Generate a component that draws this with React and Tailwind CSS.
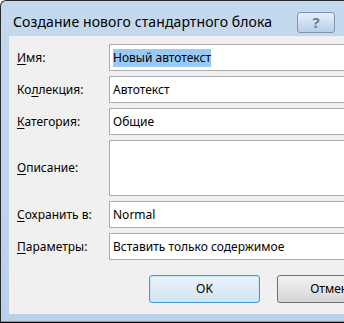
import React from 'react';

const font = { fontFamily: '"Noto Sans", "DejaVu Sans", sans-serif' };

const Label = ({ k, rest, pre = '' }) => (
    <span className="w-[92px] shrink-0 text-[12px] text-black">
        {pre}<span className="underline underline-offset-2">{k}</span>{rest}
    </span>
);

const Field = ({ children, tall }) => (
    <div className={`w-[300px] ${tall ? 'h-[56px]' : 'h-[27px]'} bg-white border border-[#ababab] flex items-center pl-[3px] text-[12px] text-black`}>
        {children}
    </div>
);

export default function App() {
    return (
        <div className="w-[344px] h-[323px] overflow-hidden bg-white" style={font}>
            <div className="w-[420px] h-[323px] rounded-tl-[6px] border-l border-t border-[#2a2a2a] bg-gradient-to-b from-[#c4d9ee] to-[#b9d1ea] flex flex-col">
                {/* Title bar */}
                <div className="h-[35px] flex items-center shrink-0">
                    <span className="pl-[12px] pt-[6px] text-[14px] tracking-[0.1px] text-black w-[296px] whitespace-nowrap">Создание нового стандартного блока</span>
                    <div className="w-[38px] h-[21px] mt-[7px] rounded-[3px] border border-[#7f93ad] bg-gradient-to-b from-[#e6eef8] via-[#d0dff0] to-[#b8cde5] flex items-center justify-center">
                        <span className="text-[15px] font-bold text-[#6b7f99] leading-none">?</span>
                    </div>
                </div>

                {/* Client area */}
                <div className="ml-[8px] bg-[#f0f0f0] flex flex-col pt-[8px] pl-[8px] h-[278px]">
                    <div className="flex items-center">
                        <Label k="И" rest="мя:" />
                        <Field><span className="bg-[#99c9f5] leading-[18px]">Новый автотекст</span></Field>
                    </div>
                    <div className="flex items-center mt-[5px]">
                        <Label pre="Ко" k="л" rest="лекция:" />
                        <Field>Автотекст</Field>
                    </div>
                    <div className="flex items-center mt-[5px]">
                        <Label k="К" rest="атегория:" />
                        <Field>Общие</Field>
                    </div>
                    <div className="flex items-center mt-[5px]">
                        <Label k="О" rest="писание:" />
                        <Field tall />
                    </div>
                    <div className="flex items-center mt-[5px]">
                        <Label k="С" rest="охранить в:" />
                        <Field>Normal</Field>
                    </div>
                    <div className="flex items-center mt-[5px]">
                        <Label k="П" rest="араметры:" />
                        <Field>Вставить только содержимое</Field>
                    </div>

                    <div className="flex gap-[17px] pl-[132px] mt-[15px]">
                        <button className="w-[111px] h-[28px] rounded-[3px] border border-[#3c9fd6] bg-gradient-to-b from-[#eaf4fb] to-[#d2e3ef] text-[12px] text-black shadow-[inset_0_0_0_1px_#c4e5f6]">OK</button>
                        <button className="w-[111px] h-[28px] rounded-[3px] border border-[#707070] bg-gradient-to-b from-[#f2f2f2] to-[#d6d6d6] text-[12px] text-black">Отмена</button>
                    </div>
                </div>

                <div className="h-[7px]" />
                <div className="h-[1px] bg-[#4aa8dc]" />
                <div className="h-[1px] bg-black" />
            </div>
        </div>
    );
}
